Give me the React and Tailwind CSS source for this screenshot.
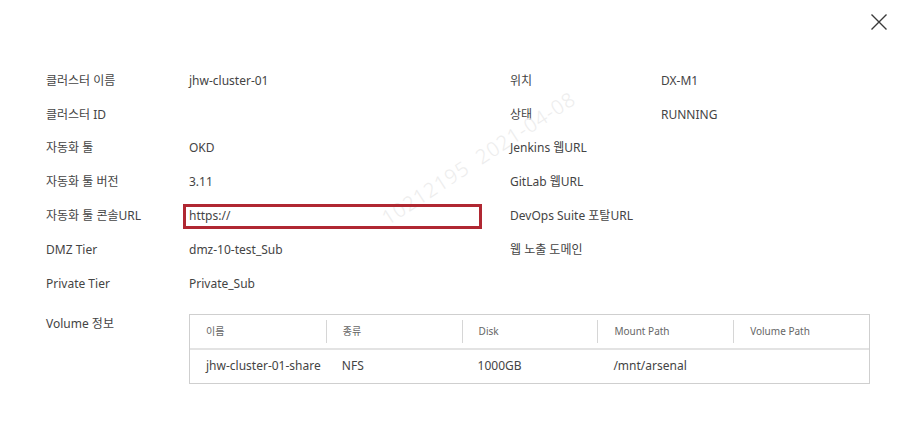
import React from "react";

const font = { fontFamily: '"Noto Sans", "Noto Sans CJK KR", sans-serif' };

const left = [
  ["클러스터 이름", "jhw-cluster-01"],
  ["클러스터 ID", ""],
  ["자동화 툴", "OKD"],
  ["자동화 툴 버전", "3.11"],
  ["자동화 툴 콘솔URL", "https://", true],
  ["DMZ Tier", "dmz-10-test_Sub"],
  ["Private Tier", "Private_Sub"],
];

const right = [
  ["위치", "DX-M1"],
  ["상태", "RUNNING"],
  ["Jenkins 웹URL", ""],
  ["GitLab 웹URL", ""],
  ["DevOps Suite 포탈URL", ""],
  ["웹 노출 도메인", ""],
];

function Row({ label, value, highlight, labelW }) {
  return (
    <div className="flex items-center h-[33.8px]">
      <div className={`${labelW} shrink-0`}>{label}</div>
      <div className="relative flex-1">
        {highlight && (
          <div className="absolute left-[-6px] top-[-3px] w-[299px] h-[25px] border-[3px] border-[#b02832]" />
        )}
        {value}
      </div>
    </div>
  );
}

export default function App() {
  const heads = ["이름", "종류", "Disk", "Mount Path", "Volume Path"];
  const body = ["jhw-cluster-01-share", "NFS", "1000GB", "/mnt/arsenal", ""];
  return (
    <div className="relative w-[900px] h-[421px] bg-white text-[12px] text-[#444] overflow-hidden" style={font}>
      <button className="absolute left-[869px] top-[12px] w-[20px] h-[20px] flex items-center justify-center">
        <svg width="18" height="18" viewBox="0 0 18 18" fill="none" stroke="#3a3a3a" strokeWidth="1.4">
          <path d="M1.5 1.5 L16.5 16.5 M16.5 1.5 L1.5 16.5" />
        </svg>
      </button>

      <div
        className="absolute left-[384px] top-[205px] text-[20px] font-light text-[#ededed] tracking-[1px] whitespace-nowrap pointer-events-none"
        style={{ transform: "rotate(-33deg)", transformOrigin: "left center" }}
      >
        10212195&nbsp;&nbsp;2021-04-08
      </div>

      <div className="pl-[46px] pt-[64px] pr-[30px]">
        <div className="flex">
          <div className="w-[464px]">
            {left.map(([l, v, h]) => (
              <Row key={l} label={l} value={v} highlight={h} labelW="w-[143px]" />
            ))}
          </div>
          <div className="flex-1">
            {right.map(([l, v]) => (
              <Row key={l} label={l} value={v} labelW="w-[151px]" />
            ))}
          </div>
        </div>

        <div className="flex mt-[13px]">
          <div className="w-[143px] shrink-0 pt-[1px] leading-[17px]">Volume 정보</div>
          <div className="w-[681px] border border-[#cfcfcf]">
            <div className="grid grid-cols-5 h-[35px] border-b-2 border-[#e3e3e3] items-center text-[10px] text-[#666]">
              {heads.map((h, i) => (
                <div key={h} className={`h-[23px] flex items-center pl-[16px] ${i > 0 ? "border-l border-[#d6d6d6]" : ""}`}>
                  {h}
                </div>
              ))}
            </div>
            <div className="grid grid-cols-5 h-[33px] items-center">
              {body.map((b, i) => (
                <div key={i} className="pl-[16px] whitespace-nowrap">{b}</div>
              ))}
            </div>
          </div>
        </div>
      </div>
    </div>
  );
}
